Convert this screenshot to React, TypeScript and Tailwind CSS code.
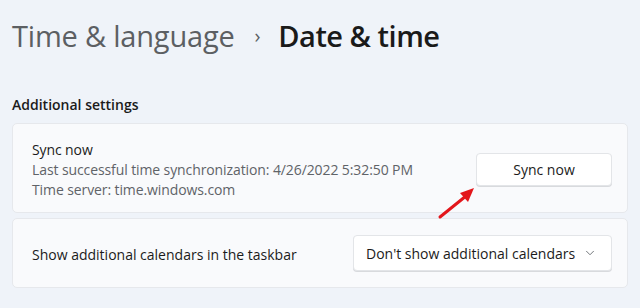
import { ChevronDown } from "lucide-react";

const font = { fontFamily: '"Open Sans", "Noto Sans", Arial, sans-serif' };

function SyncArrow() {
  return (
    <svg className="absolute left-[436px] top-[184px]" width="44" height="38" viewBox="0 0 44 38" aria-hidden="true">
      <line x1="4" y1="33" x2="30" y2="12" stroke="#e3161b" strokeWidth="3" strokeLinecap="round" />
      <polygon points="38,4 24,9 32,18" fill="#e3161b" />
    </svg>
  );
}

export default function App() {
  return (
    <div
      className="relative h-[308px] w-[640px] overflow-hidden bg-[#eff3f9] px-3 text-[#1b1b1b]"
      style={font}
    >
      <div className="flex items-center pt-[16px] text-[29px] leading-[40px] tracking-[-0.2px]">
        <span className="text-[#5c5f63]">Time &amp; language</span>
        <span className="ml-[20px] mr-[18px] text-[20px] text-[#5c5f63]">›</span>
        <span className="font-semibold tracking-[-0.5px] text-[#1a1a1a]">Date &amp; time</span>
      </div>

      <div className="mt-[40px] text-[14px] font-semibold leading-[18px]">Additional settings</div>

      <div className="mt-[9px] flex h-[90px] items-center justify-between rounded-[5px] border border-[#e6e8ec] bg-[#f9fafc] pl-[19px] pr-[15px]">
        <div className="pt-[4px] text-[14px] leading-[20px] tracking-[-0.1px]">
          <div className="text-[#1b1b1b]">Sync now</div>
          <div className="text-[#5f6368]">Last successful time synchronization: 4/26/2022 5:32:50 PM</div>
          <div className="text-[#5f6368]">Time server: time.windows.com</div>
        </div>
        <button
          type="button"
          className="mt-[2px] h-[33px] w-[136px] rounded-[4px] border border-[#e3e5e8] bg-white text-[14px] text-[#1b1b1b] shadow-[0_1px_0_#d8dadd]"
        >
          Sync now
        </button>
      </div>

      <div className="mt-[5px] flex h-[70px] items-center justify-between rounded-[5px] border border-[#e6e8ec] bg-[#f9fafc] pl-[19px] pr-[15px]">
        <span className="pt-[2px] text-[14px]">Show additional calendars in the taskbar</span>
        <button
          type="button"
          className="flex h-[36px] w-[259px] items-center justify-between rounded-[4px] border border-[#e3e5e8] bg-white pl-[12px] pr-[14px] text-[14px] text-[#1b1b1b] shadow-[0_1px_0_#d8dadd]"
        >
          <span>Don&apos;t show additional calendars</span>
          <ChevronDown size={14} strokeWidth={1.5} className="text-[#5f6368]" />
        </button>
      </div>

      <SyncArrow />
    </div>
  );
}
